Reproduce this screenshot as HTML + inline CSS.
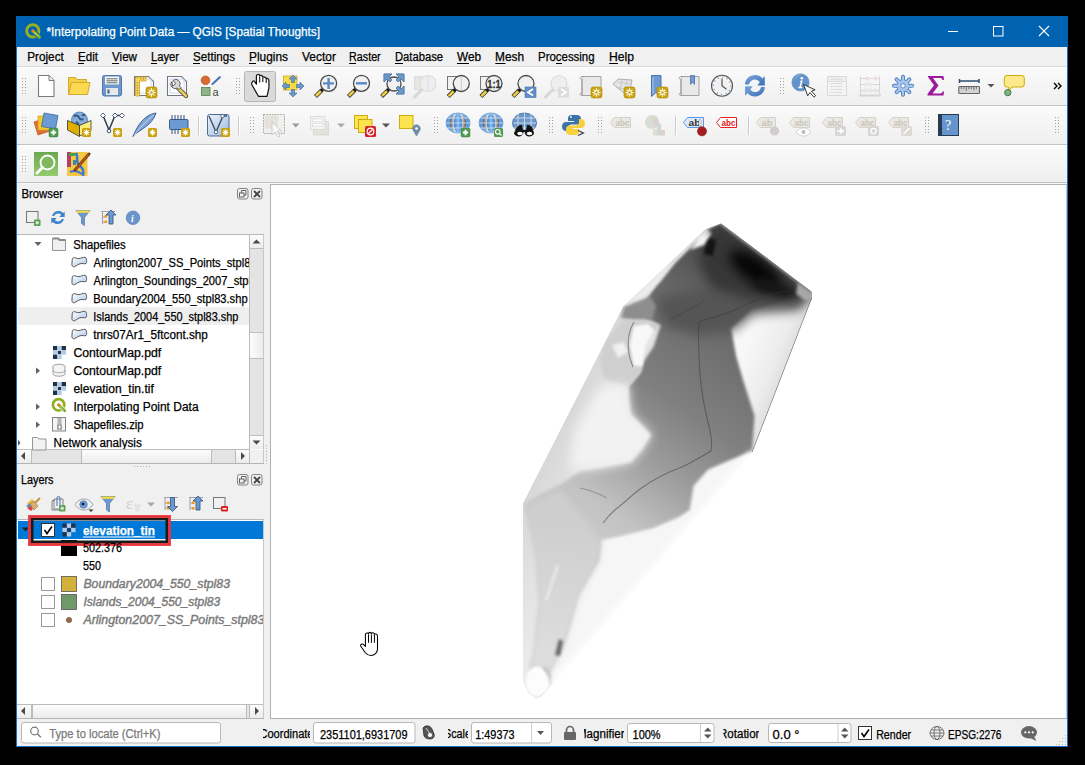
<!DOCTYPE html>
<html><head><meta charset="utf-8">
<style>
*{box-sizing:border-box}
html,body{margin:0;padding:0}
body{width:1085px;height:765px;background:#000;position:relative;overflow:hidden;font-family:"Liberation Sans",sans-serif;font-size:11px;color:#000}
.a{position:absolute}
.tb{position:absolute;left:17px;width:1050px;background:linear-gradient(#fafafa,#efefef);border-bottom:1px solid #c2c2c2;border-top:1px solid #fff}
</style></head>
<body>
<div class="a" style="left:16px;top:16px;width:1052px;height:731px;background:#f0f0f0;border:1px solid #1a6fc0"></div>
<div class="a" style="left:16px;top:16px;width:1052px;height:31px;background:#0063b1"></div>
<div class="a" style="left:17px;top:47px;width:1050px;height:20px;background:#f0f0f0;border-bottom:1px solid #dadada"></div>
<div class="tb" style="top:67px;height:39px"></div>
<div class="tb" style="top:106px;height:39px"></div>
<div class="tb" style="top:145px;height:38px"></div>
<div class="a" style="left:17px;top:183px;width:1050px;height:1px;background:#f6f6f6"></div>
<div class="a" style="left:270px;top:184px;width:797px;height:535px;background:#fff;border:1px solid #b0b0b0;border-right:1px solid #c8c8c8"></div>
<svg width="1085" height="765" style="position:absolute;left:0;top:0"><defs><clipPath id="fp"><path d="M721 223.5 L812 292 L812 298 L752.5 452 L541 697 L536 699 L528 693 L523 682 L523 503 L606.5 339 L623 306.5 L696.5 237.6 L706 229 Z"/></clipPath><filter id="b0" x="-30%" y="-30%" width="160%" height="160%" color-interpolation-filters="sRGB"><feGaussianBlur stdDeviation="0.8"/></filter><filter id="b1" x="-30%" y="-30%" width="160%" height="160%" color-interpolation-filters="sRGB"><feGaussianBlur stdDeviation="1.6"/></filter><filter id="b2" x="-30%" y="-30%" width="160%" height="160%" color-interpolation-filters="sRGB"><feGaussianBlur stdDeviation="3"/></filter><filter id="b3" x="-30%" y="-30%" width="160%" height="160%" color-interpolation-filters="sRGB"><feGaussianBlur stdDeviation="6"/></filter><filter id="b4" x="-30%" y="-30%" width="160%" height="160%" color-interpolation-filters="sRGB"><feGaussianBlur stdDeviation="10"/></filter><linearGradient id="bodyg" gradientUnits="userSpaceOnUse" x1="760" y1="270" x2="560" y2="560"><stop offset="0" stop-color="#4a4a4a"/><stop offset="0.22" stop-color="#6c6c6c"/><stop offset="0.45" stop-color="#808080"/><stop offset="0.62" stop-color="#9c9c9c"/><stop offset="0.8" stop-color="#c2c2c2"/><stop offset="1" stop-color="#d0d0d0"/></linearGradient><linearGradient id="chang" gradientUnits="userSpaceOnUse" x1="560" y1="520" x2="540" y2="680"><stop offset="0" stop-color="#cecece"/><stop offset="1" stop-color="#e0e0e0"/></linearGradient><linearGradient id="baseg" gradientUnits="userSpaceOnUse" x1="545" y1="410" x2="630" y2="450"><stop offset="0" stop-color="#d2d2d2"/><stop offset="1" stop-color="#ececec"/></linearGradient><linearGradient id="rightg" gradientUnits="userSpaceOnUse" x1="740" y1="360" x2="790" y2="380"><stop offset="0" stop-color="#f8f8f8"/><stop offset="0.6" stop-color="#ececec"/><stop offset="1" stop-color="#d8d8d8"/></linearGradient></defs><g clip-path="url(#fp)"><path d="M721 223.5 L812 292 L812 298 L752.5 452 L541 697 L536 699 L528 693 L523 682 L523 503 L606.5 339 L623 306.5 L696.5 237.6 L706 229 Z" fill="url(#baseg)"/><path d="M752 309 L790 300 L812 294 L812 298 L752.5 452 L740 452 L754.6 416 L743 380 L736 356 L731 328 Z" fill="url(#rightg)"/><path d="M708 469.5 L730 460 L752 451 L760 452 L541 700 L565.4 641.6 L578.5 595.9 L599 560 L601 540 L620 536 L653 528 L678.8 517 L689.7 509.7 L693.4 486 Z" fill="#f6f6f6" filter="url(#b1)"/><path d="M721 223.5 L812 292 L811 292 L787.8 301.6 L752 309 L731 328 L736 356 L743 380 L754.6 416 L752 451 L730 460 L708 469.5 L693.4 486 L689.7 509.7 L678.8 517 L653 528 L620 536 L601 540 L599 560 L578.5 595.9 L565.4 641.6 L552.3 667.8 L540 690 L529.4 667.8 L532.7 654.7 L539 602.4 L536 556.6 L523.6 504.6 L523.6 504.6 L539 495 L563 483 L580 471.3 L600 468 L631 462 L642 449.4 L651.3 434.8 L631 414.6 L629 400 L629 386 L640.7 372 L644 361 L653.5 346.8 L660.6 325.6 L646 318 L640 308 L648 298 L657 283 L672 263 L690 246 L706 231 Z" fill="url(#bodyg)" filter="url(#b1)"/><path d="M528 508 L560 490 L601 540 L599 560 L578.5 595.9 L565.4 641.6 L552.3 667.8 L529.4 667.8 L532.7 654.7 L539 602.4 L536 556.6 Z" fill="url(#chang)" filter="url(#b2)"/><path d="M655 298 L700 288 L770 298 L812 292 L800 310 L753 314 L734 330 L700 336 L664 326 Z" fill="#555555" filter="url(#b3)"/><path d="M721 223.5 L812 292 L800 302 L752 300 L712 288 L698 262 L704 238 Z" fill="#363636" filter="url(#b3)"/><ellipse cx="0" cy="0" rx="30" ry="12" fill="#050505" filter="url(#b3)" transform="translate(755 270) rotate(35)"/><path d="M762 276 L798 292 L784 297 L752 287 Z" fill="#161616" filter="url(#b2)"/><path d="M707 238 L716 240 L713 256 L704 254 Z" fill="#141414" filter="url(#b1)"/><path d="M798 282 L812 291 L812 299 L806 301 L796 294 Z" fill="#a8a8a8" filter="url(#b1)"/><path d="M721 223.5L812 292" stroke="#8a8a8a" stroke-width="3" filter="url(#b1)"/><path d="M706 229 L696.5 237.6 L623.3 306.5 L626 308 L642 300 L660 282 L676 262 L694 244 L710 232 Z" fill="#ececec" filter="url(#b1)"/><path d="M700 236 L712 232 L704 245 L690 250 Z" fill="#f4f4f4" filter="url(#b1)"/><path d="M650 297 L636 302 L624 307 L621 318 L634 320 L652 320 L656 306 Z" fill="#8e8e8e" filter="url(#b1)"/><path d="M606 340 L624 320 L645 320 L660.6 325.6 L646.5 337 L640.7 372 L629 386 L604 380 L600 360 Z" fill="#cfcfcf" filter="url(#b1)"/><path d="M634 326 L648 324 L654 330 L646 345 L642 366 L634 366 L630 345 Z" fill="#f8f8f8" filter="url(#b0)"/><path d="M612 345 L624 342 L628 352 L618 358 Z" fill="#f0f0f0" filter="url(#b1)"/><path d="M634 322c-5 8-7 20-5 32 1 6 3 10 4 13" fill="none" stroke="#555" stroke-width="1.1" opacity="0.6"/><path d="M604 384 L629 386 L629 400 L631 414.6 L651.3 434.8 L642 449.4 L631 462 L600 468 L570 470 L575 430 L595 395 Z" fill="#f2f2f2" filter="url(#b3)"/><path d="M790 291c-12 0-30 6-45 14-14 8-28 12-45 16-2 5-2 15-1 30 0 20 2 35 4 48 2 10 3 15 7 32 2 8 2 14 1 20-10 6-20 12-29 16-14 5-28 12-42 22-9 7-16 14-24 20-6 5-10 10-13 14" fill="none" stroke="#3a3a3a" stroke-width="1.1" opacity="0.5"/><path d="M580 488c9 2 18 5 27 10" fill="none" stroke="#555" stroke-width="1" opacity="0.45"/><path d="M705 300c-8 6-20 12-35 20" fill="none" stroke="#333" stroke-width="1" opacity="0.35"/><path d="M555 655l4-16 4 2-3 15z" fill="#666" filter="url(#b1)"/><path d="M546 600c4-10 8-25 12-35" fill="none" stroke="#f2f2f2" stroke-width="2" filter="url(#b1)"/><ellipse cx="537" cy="681.5" rx="11" ry="15" fill="#fcfcfc" filter="url(#b0)"/><path d="M544 668c4 3 7 8 7 14s-4 12-10 15" fill="none" stroke="#c4c4c4" stroke-width="2.6" filter="url(#b0)"/><path d="M752.5 452L541 697" stroke="#fff" stroke-width="5" filter="url(#b2)"/><path d="M812 298L752.5 452" stroke="#444" stroke-width="1.2" opacity="0.7"/></g><path d="M365.4 646.4V635C365.4 632.6 368.3 632.6 368.6 634C368.8 631.8 371.2 631.8 371.4 634C371.6 632.4 374.2 632.4 374.4 634.4C374.6 633.6 377.5 633.6 377.5 636.2V649C377.5 652.5 374.5 655.5 371 655.5C368.5 655.5 366.8 654.5 365.5 653L360.8 646.2C360 645 361.5 643.5 363 644.2Z" fill="#fff" stroke="#000" stroke-width="1.05" stroke-linejoin="round"/><path d="M368.5 634.5V642.8M371.4 634.5V642.8M374.4 634.5V642.8" stroke="#000" stroke-width="1"/></svg>
<svg width="1085" height="765" viewBox="0 0 1085 765" style="position:absolute;left:0;top:0"><rect x="22" y="78" width="1" height="1" fill="#a0a0a0"/><rect x="25" y="78" width="1" height="1" fill="#a0a0a0"/><rect x="22" y="81" width="1" height="1" fill="#a0a0a0"/><rect x="25" y="81" width="1" height="1" fill="#a0a0a0"/><rect x="22" y="84" width="1" height="1" fill="#a0a0a0"/><rect x="25" y="84" width="1" height="1" fill="#a0a0a0"/><rect x="22" y="87" width="1" height="1" fill="#a0a0a0"/><rect x="25" y="87" width="1" height="1" fill="#a0a0a0"/><rect x="22" y="90" width="1" height="1" fill="#a0a0a0"/><rect x="25" y="90" width="1" height="1" fill="#a0a0a0"/><rect x="22" y="93" width="1" height="1" fill="#a0a0a0"/><rect x="25" y="93" width="1" height="1" fill="#a0a0a0"/><rect x="236" y="78" width="1" height="1" fill="#a0a0a0"/><rect x="239" y="78" width="1" height="1" fill="#a0a0a0"/><rect x="236" y="81" width="1" height="1" fill="#a0a0a0"/><rect x="239" y="81" width="1" height="1" fill="#a0a0a0"/><rect x="236" y="84" width="1" height="1" fill="#a0a0a0"/><rect x="239" y="84" width="1" height="1" fill="#a0a0a0"/><rect x="236" y="87" width="1" height="1" fill="#a0a0a0"/><rect x="239" y="87" width="1" height="1" fill="#a0a0a0"/><rect x="236" y="90" width="1" height="1" fill="#a0a0a0"/><rect x="239" y="90" width="1" height="1" fill="#a0a0a0"/><rect x="236" y="93" width="1" height="1" fill="#a0a0a0"/><rect x="239" y="93" width="1" height="1" fill="#a0a0a0"/><rect x="780" y="78" width="1" height="1" fill="#a0a0a0"/><rect x="783" y="78" width="1" height="1" fill="#a0a0a0"/><rect x="780" y="81" width="1" height="1" fill="#a0a0a0"/><rect x="783" y="81" width="1" height="1" fill="#a0a0a0"/><rect x="780" y="84" width="1" height="1" fill="#a0a0a0"/><rect x="783" y="84" width="1" height="1" fill="#a0a0a0"/><rect x="780" y="87" width="1" height="1" fill="#a0a0a0"/><rect x="783" y="87" width="1" height="1" fill="#a0a0a0"/><rect x="780" y="90" width="1" height="1" fill="#a0a0a0"/><rect x="783" y="90" width="1" height="1" fill="#a0a0a0"/><rect x="780" y="93" width="1" height="1" fill="#a0a0a0"/><rect x="783" y="93" width="1" height="1" fill="#a0a0a0"/><rect x="22" y="117" width="1" height="1" fill="#a0a0a0"/><rect x="25" y="117" width="1" height="1" fill="#a0a0a0"/><rect x="22" y="120" width="1" height="1" fill="#a0a0a0"/><rect x="25" y="120" width="1" height="1" fill="#a0a0a0"/><rect x="22" y="123" width="1" height="1" fill="#a0a0a0"/><rect x="25" y="123" width="1" height="1" fill="#a0a0a0"/><rect x="22" y="126" width="1" height="1" fill="#a0a0a0"/><rect x="25" y="126" width="1" height="1" fill="#a0a0a0"/><rect x="22" y="129" width="1" height="1" fill="#a0a0a0"/><rect x="25" y="129" width="1" height="1" fill="#a0a0a0"/><rect x="22" y="132" width="1" height="1" fill="#a0a0a0"/><rect x="25" y="132" width="1" height="1" fill="#a0a0a0"/><rect x="250" y="117" width="1" height="1" fill="#a0a0a0"/><rect x="253" y="117" width="1" height="1" fill="#a0a0a0"/><rect x="250" y="120" width="1" height="1" fill="#a0a0a0"/><rect x="253" y="120" width="1" height="1" fill="#a0a0a0"/><rect x="250" y="123" width="1" height="1" fill="#a0a0a0"/><rect x="253" y="123" width="1" height="1" fill="#a0a0a0"/><rect x="250" y="126" width="1" height="1" fill="#a0a0a0"/><rect x="253" y="126" width="1" height="1" fill="#a0a0a0"/><rect x="250" y="129" width="1" height="1" fill="#a0a0a0"/><rect x="253" y="129" width="1" height="1" fill="#a0a0a0"/><rect x="250" y="132" width="1" height="1" fill="#a0a0a0"/><rect x="253" y="132" width="1" height="1" fill="#a0a0a0"/><rect x="434" y="117" width="1" height="1" fill="#a0a0a0"/><rect x="437" y="117" width="1" height="1" fill="#a0a0a0"/><rect x="434" y="120" width="1" height="1" fill="#a0a0a0"/><rect x="437" y="120" width="1" height="1" fill="#a0a0a0"/><rect x="434" y="123" width="1" height="1" fill="#a0a0a0"/><rect x="437" y="123" width="1" height="1" fill="#a0a0a0"/><rect x="434" y="126" width="1" height="1" fill="#a0a0a0"/><rect x="437" y="126" width="1" height="1" fill="#a0a0a0"/><rect x="434" y="129" width="1" height="1" fill="#a0a0a0"/><rect x="437" y="129" width="1" height="1" fill="#a0a0a0"/><rect x="434" y="132" width="1" height="1" fill="#a0a0a0"/><rect x="437" y="132" width="1" height="1" fill="#a0a0a0"/><rect x="549" y="117" width="1" height="1" fill="#a0a0a0"/><rect x="552" y="117" width="1" height="1" fill="#a0a0a0"/><rect x="549" y="120" width="1" height="1" fill="#a0a0a0"/><rect x="552" y="120" width="1" height="1" fill="#a0a0a0"/><rect x="549" y="123" width="1" height="1" fill="#a0a0a0"/><rect x="552" y="123" width="1" height="1" fill="#a0a0a0"/><rect x="549" y="126" width="1" height="1" fill="#a0a0a0"/><rect x="552" y="126" width="1" height="1" fill="#a0a0a0"/><rect x="549" y="129" width="1" height="1" fill="#a0a0a0"/><rect x="552" y="129" width="1" height="1" fill="#a0a0a0"/><rect x="549" y="132" width="1" height="1" fill="#a0a0a0"/><rect x="552" y="132" width="1" height="1" fill="#a0a0a0"/><rect x="598" y="117" width="1" height="1" fill="#a0a0a0"/><rect x="601" y="117" width="1" height="1" fill="#a0a0a0"/><rect x="598" y="120" width="1" height="1" fill="#a0a0a0"/><rect x="601" y="120" width="1" height="1" fill="#a0a0a0"/><rect x="598" y="123" width="1" height="1" fill="#a0a0a0"/><rect x="601" y="123" width="1" height="1" fill="#a0a0a0"/><rect x="598" y="126" width="1" height="1" fill="#a0a0a0"/><rect x="601" y="126" width="1" height="1" fill="#a0a0a0"/><rect x="598" y="129" width="1" height="1" fill="#a0a0a0"/><rect x="601" y="129" width="1" height="1" fill="#a0a0a0"/><rect x="598" y="132" width="1" height="1" fill="#a0a0a0"/><rect x="601" y="132" width="1" height="1" fill="#a0a0a0"/><rect x="925" y="117" width="1" height="1" fill="#a0a0a0"/><rect x="928" y="117" width="1" height="1" fill="#a0a0a0"/><rect x="925" y="120" width="1" height="1" fill="#a0a0a0"/><rect x="928" y="120" width="1" height="1" fill="#a0a0a0"/><rect x="925" y="123" width="1" height="1" fill="#a0a0a0"/><rect x="928" y="123" width="1" height="1" fill="#a0a0a0"/><rect x="925" y="126" width="1" height="1" fill="#a0a0a0"/><rect x="928" y="126" width="1" height="1" fill="#a0a0a0"/><rect x="925" y="129" width="1" height="1" fill="#a0a0a0"/><rect x="928" y="129" width="1" height="1" fill="#a0a0a0"/><rect x="925" y="132" width="1" height="1" fill="#a0a0a0"/><rect x="928" y="132" width="1" height="1" fill="#a0a0a0"/><rect x="1055" y="117" width="1" height="1" fill="#a0a0a0"/><rect x="1058" y="117" width="1" height="1" fill="#a0a0a0"/><rect x="1055" y="120" width="1" height="1" fill="#a0a0a0"/><rect x="1058" y="120" width="1" height="1" fill="#a0a0a0"/><rect x="1055" y="123" width="1" height="1" fill="#a0a0a0"/><rect x="1058" y="123" width="1" height="1" fill="#a0a0a0"/><rect x="1055" y="126" width="1" height="1" fill="#a0a0a0"/><rect x="1058" y="126" width="1" height="1" fill="#a0a0a0"/><rect x="1055" y="129" width="1" height="1" fill="#a0a0a0"/><rect x="1058" y="129" width="1" height="1" fill="#a0a0a0"/><rect x="1055" y="132" width="1" height="1" fill="#a0a0a0"/><rect x="1058" y="132" width="1" height="1" fill="#a0a0a0"/><rect x="22" y="156" width="1" height="1" fill="#a0a0a0"/><rect x="25" y="156" width="1" height="1" fill="#a0a0a0"/><rect x="22" y="159" width="1" height="1" fill="#a0a0a0"/><rect x="25" y="159" width="1" height="1" fill="#a0a0a0"/><rect x="22" y="162" width="1" height="1" fill="#a0a0a0"/><rect x="25" y="162" width="1" height="1" fill="#a0a0a0"/><rect x="22" y="165" width="1" height="1" fill="#a0a0a0"/><rect x="25" y="165" width="1" height="1" fill="#a0a0a0"/><rect x="22" y="168" width="1" height="1" fill="#a0a0a0"/><rect x="25" y="168" width="1" height="1" fill="#a0a0a0"/><rect x="22" y="171" width="1" height="1" fill="#a0a0a0"/><rect x="25" y="171" width="1" height="1" fill="#a0a0a0"/><rect x="198" y="116" width="1" height="19" fill="#cbcbcb"/><rect x="199" y="116" width="1" height="19" fill="#fff"/><rect x="238" y="116" width="1" height="19" fill="#cbcbcb"/><rect x="239" y="116" width="1" height="19" fill="#fff"/><rect x="675" y="116" width="1" height="19" fill="#cbcbcb"/><rect x="676" y="116" width="1" height="19" fill="#fff"/><rect x="748" y="116" width="1" height="19" fill="#cbcbcb"/><rect x="749" y="116" width="1" height="19" fill="#fff"/><path d="M38.5 75.5H49l5 5v16H38.5z" fill="#fff" stroke="#7a7a7a" stroke-width="1.1"/><path d="M49 75.5v5h5" fill="#eee" stroke="#7a7a7a" stroke-width="1"/><path d="M68.5 94.5V77.5h7l1.5 2h9.5v3" fill="#f6cf45" stroke="#d1a92e" stroke-width="1"/><path d="M68.5 94.5l3-12H90l-2.5 12z" fill="#fcd952" stroke="#d1a92e" stroke-width="1"/><rect x="102.5" y="75.5" width="19" height="20.5" rx="2" fill="#6b97cc" stroke="#4f79ad" stroke-width="1"/><rect x="105" y="76.5" width="14" height="8" fill="#f6f6f6"/><path d="M106.5 78.8h11M106.5 80.8h11M106.5 82.8h11" stroke="#444" stroke-width="0.8"/><rect x="106" y="88" width="12" height="7" fill="#e8e8e8"/><rect x="107.5" y="89.5" width="2" height="4" fill="#3f5f8a"/><path d="M134.5 76.5h14l5 5v14h-19z" fill="#fff" stroke="#777" stroke-width="1.1"/><rect x="137" y="79" width="14" height="14" fill="none" stroke="#b8cdf2" stroke-width="0.8"/><path d="M135.5 77h10.5v4h-6.5v15h-4z" fill="#f3d35c" stroke="#c9a22a" stroke-width="0.8"/><path d="M136.5 83h1.8M136.5 85.5h1.8M136.5 88h1.8M136.5 90.5h1.8M136.5 93h1.8M141 78v1.6M143.5 78v1.6" stroke="#8a6a10" stroke-width="0.6"/><rect x="146" y="87" width="11" height="11" rx="2" fill="#c9a20f" stroke="#b18c00" stroke-width="0.6"/><circle cx="151.5" cy="92.5" r="1.9" fill="none" stroke="#fff" stroke-width="1.1"/><path d="M154.10 92.50L155.70 92.50M153.34 94.34L154.47 95.47M151.50 95.10L151.50 96.70M149.66 94.34L148.53 95.47M148.90 92.50L147.30 92.50M149.66 90.66L148.53 89.53M151.50 89.90L151.50 88.30M153.34 90.66L154.47 89.53" stroke="#fff" stroke-width="1.1"/><path d="M167.5 76.5h14l5 5v14h-19z" fill="#fff" stroke="#777" stroke-width="1.1"/><rect x="170" y="79" width="14" height="14" fill="none" stroke="#b8cdf2" stroke-width="0.8"/><path d="M178 88l8 8" stroke="#4a4020" stroke-width="4.2" stroke-linecap="round"/><path d="M178 88l8 8" stroke="#e8cc6a" stroke-width="2.6" stroke-linecap="round"/><path d="M172 81.5a4.3 4.3 0 0 0 5.5 6.5l1.5 1.5 2-2-1.5-1.5a4.3 4.3 0 0 0-6.5-5.5l2.5 2.5-1 2-2 1z" fill="#d8d8d8" stroke="#555" stroke-width="0.9"/><circle cx="205.5" cy="80.3" r="4.3" fill="#d86b32" stroke="#b45220" stroke-width="0.8"/><path d="M212.5 84l7.3-6.8" stroke="#4a78b6" stroke-width="2.2" stroke-linecap="round"/><rect x="201.5" y="87.5" width="8.5" height="8" fill="#8fb48b" stroke="#5a8d55" stroke-width="0.9"/><text x="212.5" y="95.5" font-size="11" font-family="Liberation Sans" fill="#444">a</text><rect x="244.5" y="71.5" width="31" height="30" rx="2" fill="#dadada" stroke="#b5b5b5"/><path d="M256.4 84.2V76C256.4 74 259.6 74 259.7 75.8C260 75 262.6 75 262.8 77C263.3 76.8 266 76.8 266.2 78.8C266.6 78.2 268.9 78.2 268.9 80.5V88L267 96.3H258.4L252 85C251 83.3 252.5 80.5 254 80.8Z" fill="#fff" stroke="#111" stroke-width="1.2" stroke-linejoin="round"/><path d="M259.7 76.5V82.4M262.8 77.5V82M266.2 79.2V82.9" stroke="#111" stroke-width="1.1"/><rect x="283.5" y="76" width="13.5" height="14" fill="#f8de3f" stroke="#cda82b" stroke-width="0.8"/><path d="M293 75l4 4h-2.5v3.5h-3V79H289zM293 97l4-4h-2.5v-3.5h-3V93H289zM282 86l4-4v2.5h3.5v3H286V90zM304 86l-4-4v2.5h-3.5v3H300V90z" fill="#6d97c9" stroke="#4a74a8" stroke-width="0.7"/><path d="M315.5 96.5L322.0 90.0" stroke="#3a3a3a" stroke-width="4.2" stroke-linecap="butt"/><path d="M316.0 96.0L320.8 91.2" stroke="#f2cf3b" stroke-width="2.6"/><path d="M321.5 90.5L323.5 88.5" stroke="#111" stroke-width="3"/><circle cx="328.6" cy="83.4" r="8" fill="#f0f0f0" stroke="#4a4a4a" stroke-width="1.3"/><path d="M328.6 78v11M323 83.4h11" stroke="#5a8ac4" stroke-width="2.4"/><path d="M348.4 96.39999999999999L354.9 89.89999999999999" stroke="#3a3a3a" stroke-width="4.2" stroke-linecap="butt"/><path d="M348.9 95.89999999999999L353.7 91.1" stroke="#f2cf3b" stroke-width="2.6"/><path d="M354.4 90.39999999999999L356.4 88.39999999999999" stroke="#111" stroke-width="3"/><circle cx="361.5" cy="83.3" r="8" fill="#f0f0f0" stroke="#4a4a4a" stroke-width="1.3"/><path d="M356 83.3h11" stroke="#5a8ac4" stroke-width="2.4"/><path d="M384 74h8l-3 3 3 3-2 2-3-3-3 3zM404 74v8l-3-3-3 3-2-2 3-3-3-3zM404 94h-8l3-3-3-3 2-2 3 3 3-3z" fill="#6d97c9" stroke="#4a74a8" stroke-width="0.7"/><path d="M381.6 96.4L388.1 89.9" stroke="#3a3a3a" stroke-width="4.2" stroke-linecap="butt"/><path d="M382.1 95.9L386.90000000000003 91.10000000000001" stroke="#f2cf3b" stroke-width="2.6"/><path d="M387.6 90.4L389.6 88.4" stroke="#111" stroke-width="3"/><circle cx="394" cy="84" r="7" fill="#f0f0f0" stroke="#4a4a4a" stroke-width="1.3"/><path d="M384 74h8l-3 3 3 3-2 2-3-3-3 3zM404 74v8l-3-3-3 3-2-2 3-3-3-3zM404 94h-8l3-3-3-3 2-2 3 3 3-3z" fill="#6d97c9" stroke="#4a74a8" stroke-width="0.7"/><rect x="414.5" y="76.5" width="10" height="13" fill="#e6e6e0" stroke="#dcdcd8"/><path d="M414.4 97.1L422.4 89.1" stroke="#d8d8d8" stroke-width="3.2" stroke-linecap="round"/><circle cx="428" cy="83.5" r="8" fill="#eeeeee" stroke="#dcdcdc" stroke-width="1.2"/><path d="M428 76v15" stroke="#dedede" stroke-width="1"/><rect x="447.5" y="76.5" width="10" height="13" fill="#f1f1f1" stroke="#777"/><path d="M448.2 96.6L454.7 90.1" stroke="#3a3a3a" stroke-width="4.2" stroke-linecap="butt"/><path d="M448.7 96.1L453.5 91.3" stroke="#f2cf3b" stroke-width="2.6"/><path d="M454.2 90.6L456.2 88.6" stroke="#111" stroke-width="3"/><circle cx="461.3" cy="83.5" r="8" fill="#f0f0f0" stroke="#4a4a4a" stroke-width="1.3"/><path d="M461.3 76v15" stroke="#ccc" stroke-width="1"/><rect x="480.5" y="76.5" width="10" height="13" fill="#f1f1f1" stroke="#777"/><path d="M480.9 96.6L487.4 90.1" stroke="#3a3a3a" stroke-width="4.2" stroke-linecap="butt"/><path d="M481.4 96.1L486.2 91.3" stroke="#f2cf3b" stroke-width="2.6"/><path d="M486.9 90.6L488.9 88.6" stroke="#111" stroke-width="3"/><circle cx="494" cy="83.5" r="8" fill="#f0f0f0" stroke="#4a4a4a" stroke-width="1.3"/><text x="487.3" y="88" font-size="10.5" font-weight="bold" font-family="Liberation Sans" fill="#333" stroke="#333" stroke-width="0.3" textLength="13.5" lengthAdjust="spacingAndGlyphs">1:1</text><path d="M512.9 96.6L519.4 90.1" stroke="#3a3a3a" stroke-width="4.2" stroke-linecap="butt"/><path d="M513.4 96.1L518.1999999999999 91.3" stroke="#f2cf3b" stroke-width="2.6"/><path d="M518.9 90.6L520.9 88.6" stroke="#111" stroke-width="3"/><circle cx="526" cy="83.5" r="8" fill="#f0f0f0" stroke="#4a4a4a" stroke-width="1.3"/><rect x="525" y="87" width="11" height="10.5" fill="#5f8fc9" stroke="#4a74a8" stroke-width="0.6"/><path d="M533 89l-5 3.2 5 3.2" fill="none" stroke="#fff" stroke-width="1.8"/><path d="M545.4 97.1L553.4 89.1" stroke="#d8d8d8" stroke-width="3.2" stroke-linecap="round"/><circle cx="559" cy="83.5" r="8" fill="#eeeeee" stroke="#dcdcdc" stroke-width="1.2"/><rect x="558" y="87" width="11" height="10.5" fill="#dcdcdc"/><path d="M561 89l5 3.2-5 3.2" fill="none" stroke="#fff" stroke-width="1.8"/><path d="M582 76.5h19v19h-19z" fill="#e9e9e9" stroke="#9a9a9a" stroke-width="0.9"/><path d="M582 76.5c-2.5 0-2.5 3 0 3v16c-2.5 0-2.5-2.5 0-2.5" fill="#f6f6f6" stroke="#9a9a9a" stroke-width="0.9"/><rect x="591" y="87" width="11" height="11" rx="2" fill="#c9a20f" stroke="#b18c00" stroke-width="0.6"/><circle cx="596.5" cy="92.5" r="1.9" fill="none" stroke="#fff" stroke-width="1.1"/><path d="M599.10 92.50L600.70 92.50M598.34 94.34L599.47 95.47M596.50 95.10L596.50 96.70M594.66 94.34L593.53 95.47M593.90 92.50L592.30 92.50M594.66 90.66L593.53 89.53M596.50 89.90L596.50 88.30M598.34 90.66L599.47 89.53" stroke="#fff" stroke-width="1.1"/><path d="M613 84l5-5 14 1-2 10-6 3z" fill="#e4e4e4" stroke="#a8a8a8" stroke-width="0.9"/><path d="M617 82l13 2M616 87l8 2M622 80l-2 10M627 80l-2 10" stroke="#c0c0c0" stroke-width="0.7"/><rect x="624" y="87" width="11" height="11" rx="2" fill="#c9a20f" stroke="#b18c00" stroke-width="0.6"/><circle cx="629.5" cy="92.5" r="1.9" fill="none" stroke="#fff" stroke-width="1.1"/><path d="M632.10 92.50L633.70 92.50M631.34 94.34L632.47 95.47M629.50 95.10L629.50 96.70M627.66 94.34L626.53 95.47M626.90 92.50L625.30 92.50M627.66 90.66L626.53 89.53M629.50 89.90L629.50 88.30M631.34 90.66L632.47 89.53" stroke="#fff" stroke-width="1.1"/><path d="M651.5 75.5h9.5v21l-5-4-4.5 4z" fill="#6d9bd1" stroke="#3f6aa3" stroke-width="0.9"/><path d="M653 77v17" stroke="#a8c6ec" stroke-width="1"/><rect x="657" y="87" width="11" height="11" rx="2" fill="#c9a20f" stroke="#b18c00" stroke-width="0.6"/><circle cx="662.5" cy="92.5" r="1.9" fill="none" stroke="#fff" stroke-width="1.1"/><path d="M665.10 92.50L666.70 92.50M664.34 94.34L665.47 95.47M662.50 95.10L662.50 96.70M660.66 94.34L659.53 95.47M659.90 92.50L658.30 92.50M660.66 90.66L659.53 89.53M662.50 89.90L662.50 88.30M664.34 90.66L665.47 89.53" stroke="#fff" stroke-width="1.1"/><path d="M681 76.5h18v19h-18z" fill="#e9e9e9" stroke="#9a9a9a" stroke-width="0.9"/><path d="M681 76.5c-2.5 0-2.5 3 0 3v16c-2.5 0-2.5-2.5 0-2.5" fill="#f6f6f6" stroke="#9a9a9a" stroke-width="0.9"/><path d="M690.5 75.5h4v9l-2-2.5-2 2.5z" fill="#6d9bd1" stroke="#3f6aa3" stroke-width="0.7"/><circle cx="722" cy="85.8" r="10.5" fill="#f2f2f2" stroke="#555" stroke-width="1.1"/><circle cx="722" cy="85.8" r="8.7" fill="none" stroke="#6d97d0" stroke-width="1.4" stroke-dasharray="1 3.55"/><path d="M722 78.5v7.3l4.5 3.5" fill="none" stroke="#555" stroke-width="1.2"/><defs><linearGradient id="rfg" x1="0" y1="0" x2="1" y2="1"><stop offset="0" stop-color="#7aa6dc"/><stop offset="1" stop-color="#3a6fb8"/></linearGradient></defs><path d="M745 84.5C745 79 750 75 755 75C758.5 75 761 76.5 762.5 78.5L764.8 76V85.6H757.2L759.8 82.2C758.5 80.5 756.8 79.5 755 79.5C752 79.5 749.5 81.5 749 84.5Z" fill="url(#rfg)"/><path d="M764.8 87C764.8 92.5 760 96.5 755 96.5C751.5 96.5 749 95 747.5 93L745 95.8V86.2H752.8L750.2 89.5C751.5 91.2 753.2 92 755 92C758 92 760.5 90 761 87Z" fill="url(#rfg)"/><circle cx="800.5" cy="82.4" r="8.6" fill="#6393cb" stroke="#5584bd" stroke-width="0.6"/><path d="M795 79a7 7 0 0 1 6-4.5" stroke="#9fc0e6" stroke-width="0.8" fill="none"/><circle cx="801.8" cy="78.3" r="1.3" fill="#fff"/><path d="M800.5 80.5h2.2l-1.8 6.5h1.5l-.4 1.3h-4l.4-1.3h.9l1.5-5.2h-.8z" fill="#fff"/><path d="M803.5 84.5l4.2 11.3 2.2-3.2 4.2 4.6 1.6-1.5-4.2-4.6 3.6-1.3z" fill="#fff" stroke="#222" stroke-width="0.9" stroke-linejoin="round"/><rect x="827.5" y="76.5" width="19" height="19" fill="#f4f4f4" stroke="#d8dadc"/><rect x="828" y="77" width="18" height="4.5" fill="#eceef0"/><path d="M828 81.5h18.5" stroke="#d8dadc" stroke-width="0.9"/><path d="M830 79.2h3.8M834.5 79.2h7.5M830 83.5h3.8M834.5 83.5h7.5M830 86.5h3.8M834.5 86.5h7.5M830 89.5h3.8M834.5 89.5h7.5M830 92.5h3.8M834.5 92.5h7.5" stroke="#d6d8da" stroke-width="0.9"/><path d="M860.5 76v19M879.5 76v19M860.5 78.5h19M860.5 84.5h19M860.5 90.5h19" stroke="#d2d2d2" stroke-width="0.9"/><rect x="859" y="94.5" width="22" height="2" fill="#d6d6d6"/><g fill="#f2eeee" stroke="#e0c8c8" stroke-width="0.8"><path d="M867.2 76.6l1.9 1.9-1.9 1.9-1.9-1.9zM875.6 76.6l1.9 1.9-1.9 1.9-1.9-1.9z"/></g><g fill="#eef0ee" stroke="#d6dcd6" stroke-width="0.8"><path d="M865.6 82.6l1.9 1.9-1.9 1.9-1.9-1.9zM870.4 82.6l1.9 1.9-1.9 1.9-1.9-1.9z"/></g><g fill="#eef0ee" stroke="#d8d4d8" stroke-width="0.8"><path d="M865.6 88.6l1.9 1.9-1.9 1.9-1.9-1.9zM870.4 88.6l1.9 1.9-1.9 1.9-1.9-1.9zM875.4 88.6l1.9 1.9-1.9 1.9-1.9-1.9z"/></g><path d="M903.00 85.80L903.00 76.80M903.00 85.80L909.36 79.44M903.00 85.80L912.00 85.80M903.00 85.80L909.36 92.16M903.00 85.80L903.00 94.80M903.00 85.80L896.64 92.16M903.00 85.80L894.00 85.80M903.00 85.80L896.64 79.44" stroke="#4a7fc4" stroke-width="4" stroke-linecap="round"/><circle cx="903" cy="85.8" r="6.6" fill="#4a7fc4"/><path d="M903.00 85.80L903.00 76.80M903.00 85.80L909.36 79.44M903.00 85.80L912.00 85.80M903.00 85.80L909.36 92.16M903.00 85.80L903.00 94.80M903.00 85.80L896.64 92.16M903.00 85.80L894.00 85.80M903.00 85.80L896.64 79.44" stroke="#a9c5ea" stroke-width="2.2" stroke-linecap="round"/><circle cx="903" cy="85.8" r="5.7" fill="#a9c5ea"/><circle cx="903" cy="85.8" r="2.2" fill="#fff" stroke="#4a7fc4" stroke-width="0.9"/><path d="M928 76h15.5l.5 4h-1.5c-.5-1.5-1-2-3-2h-6.5l5.5 7.5-6 8h7c2 0 2.5-.5 3-2h1.5l-.5 4H927.5v-1.5l6.5-8.7-6-8.3z" fill="#9d1a9d"/><path d="M959.5 81h19.5M959.5 79v4M979 79v4" stroke="#2d4d70" stroke-width="1.5"/><rect x="958.8" y="86.5" width="20.7" height="7" rx="0.8" fill="#d4d4d4" stroke="#666" stroke-width="1.1"/><path d="M961.3 87v2.2M963.8 87v2.2M966.3 87v3.8M968.8 87v2.2M971.3 87v2.2M973.8 87v3.2M976.3 87v2.2" stroke="#555" stroke-width="0.8"/><path d="M987.5 84h7l-3.5 3.5z" fill="#555"/><path d="M1006.8 75.5h15a2.5 2.5 0 0 1 2.5 2.5v6.5a2.5 2.5 0 0 1-2.5 2.5h-10l-3.5 4.8.5-4.8h-2a2.5 2.5 0 0 1-2.5-2.5v-6.5a2.5 2.5 0 0 1 2.5-2.5z" fill="#fbe98b" stroke="#d0ac00" stroke-width="1"/><circle cx="1007.8" cy="92.6" r="3.2" fill="#7ab77a" stroke="#4d6b4d" stroke-width="0.9"/><path d="M1054 83l3 3-3 3M1058 83l3 3-3 3" fill="none" stroke="#000" stroke-width="1.4"/><defs><linearGradient id="glb" x1="0" x2="1"><stop offset="0" stop-color="#4f8fdc"/><stop offset="0.5" stop-color="#a8cdf4"/><stop offset="1" stop-color="#4f8fdc"/></linearGradient><linearGradient id="glg" x1="0" x2="1"><stop offset="0" stop-color="#505050"/><stop offset="0.3" stop-color="#e0e0e0"/><stop offset="0.5" stop-color="#e0e0e0"/><stop offset="0.7" stop-color="#e0e0e0"/><stop offset="1" stop-color="#505050"/></linearGradient><linearGradient id="glc" x1="0" x2="1"><stop offset="0" stop-color="#2f78d0"/><stop offset="0.5" stop-color="#8cc0f0"/><stop offset="1" stop-color="#2f78d0"/></linearGradient></defs><path d="M34 122l12-4 4 13-12 4z" fill="#e36d35" stroke="#b9521f" stroke-width="0.7"/><path d="M38 116h13v14H38z" fill="#f3c92b" stroke="#caa020" stroke-width="0.7"/><path d="M44 113l14 2.5-2.5 13.5-14-2.5z" fill="#6b9bd3" stroke="#40679e" stroke-width="0.8"/><rect x="49" y="128" width="9" height="9" rx="1.5" fill="#4e9a50" stroke="#3a7a3c" stroke-width="0.5"/><path d="M53.5 129.8V135.2M50.8 132.5H56.2" stroke="#fff" stroke-width="1.8"/><circle cx="79.5" cy="120" r="8" fill="#86acd8" stroke="#3d6aa3" stroke-width="0.7"/><path d="M74 116.5c2-2 4-1 5 1s3 3 4 1M76 122c2 1 3 3 2 4M82 114.5c1 1 2 1 3 0" stroke="#33598a" stroke-width="2" fill="none"/><path d="M67.5 120.5l12 5v11l-12-6.5z" fill="#e0b000" stroke="#333" stroke-width="0.8"/><path d="M79.5 125.5l11.5-5v10l-11.5 5.5z" fill="#f8ef7a" stroke="#333" stroke-width="0.8"/><rect x="82" y="128" width="9" height="9" rx="1.5" fill="#c9a20f"/><path d="M86.5 129.6V135.4M83.6 132.5H89.4M84.47 130.47L88.53 134.53M88.53 130.47L84.47 134.53" stroke="#fff" stroke-width="1.1"/><path d="M103 115.5l6 14.5 6-14.5h7" fill="none" stroke="#2e3e55" stroke-width="1.5"/><path d="M103 113l2.5 2.5-2.5 2.5-2.5-2.5zM115 113l2.5 2.5-2.5 2.5-2.5-2.5zM122 113l2.5 2.5-2.5 2.5-2.5-2.5z" fill="#fff" stroke="#2e3e55" stroke-width="0.8"/><circle cx="109" cy="131" r="1.8" fill="#fff" stroke="#2e3e55" stroke-width="0.9"/><rect x="113" y="128" width="9" height="9" rx="1.5" fill="#c9a20f"/><path d="M117.5 129.6V135.4M114.6 132.5H120.4M115.47 130.47L119.53 134.53M119.53 130.47L115.47 134.53" stroke="#fff" stroke-width="1.1"/><path d="M133 136.5c3-8 8-16 14-20 3-2 6-3 9-3.5-1 3-3 7-6 10-4 4-9 7-15 11z" fill="#7da6d6" stroke="#35598a" stroke-width="0.9"/><path d="M134 135c6-7 12-14 20-20" stroke="#dce8f6" stroke-width="0.7" fill="none"/><rect x="148" y="128" width="9" height="9" rx="1.5" fill="#c9a20f"/><path d="M152.5 129.6V135.4M149.6 132.5H155.4M150.47 130.47L154.53 134.53M154.53 130.47L150.47 134.53" stroke="#fff" stroke-width="1.1"/><path d="M172 115v5M175 115v5M178 115v5M181 115v5M184 115v5M172 129v5M175 129v5M178 129v5" stroke="#2f4f7f" stroke-width="1"/><rect x="169.5" y="119.5" width="18.5" height="10" rx="1" fill="#6b9ad3" stroke="#2f4f7f" stroke-width="0.9"/><rect x="181" y="128" width="9" height="9" rx="1.5" fill="#c9a20f"/><path d="M185.5 129.6V135.4M182.6 132.5H188.4M183.47 130.47L187.53 134.53M187.53 130.47L183.47 134.53" stroke="#fff" stroke-width="1.1"/><defs><linearGradient id="dg" x1="0" y1="0" x2="1" y2="1"><stop offset="0" stop-color="#eef3fa"/><stop offset="1" stop-color="#9db8dc"/></linearGradient></defs><rect x="207.5" y="114.5" width="21.5" height="21.5" rx="2" fill="url(#dg)" stroke="#4d6d99" stroke-width="1"/><path d="M209 116l7 16 7-16h4" fill="none" stroke="#3a5070" stroke-width="1.4"/><circle cx="216" cy="132" r="1.7" fill="#fff" stroke="#3a5070" stroke-width="0.8"/><circle cx="222.5" cy="116" r="1.7" fill="#fff" stroke="#3a5070" stroke-width="0.8"/><rect x="221" y="128" width="9" height="9" rx="1.5" fill="#c9a20f"/><path d="M225.5 129.6V135.4M222.6 132.5H228.4M223.47 130.47L227.53 134.53M227.53 130.47L223.47 134.53" stroke="#fff" stroke-width="1.1"/><rect x="263.5" y="114.5" width="21" height="19" fill="#f0f0f0" stroke="#9a9a9a" stroke-width="0.9" stroke-dasharray="1.6 1.2"/><rect x="264.5" y="115.5" width="13.5" height="13" fill="#e4e2da"/><path d="M272 122v13l3-3 3 5 2-1-3-5h4.5z" fill="#f8f8f8" stroke="#c8c8c8" stroke-width="0.9" stroke-linejoin="round"/><path d="M292 123.5h7.5l-3.75 4z" fill="#9c9c9c"/><rect x="313.5" y="121.5" width="15" height="13.5" fill="#e4e2da" stroke="#d8d6ce" stroke-width="0.8"/><rect x="310.5" y="116.5" width="14.5" height="13" fill="#f3f3f3" stroke="#d6d6d6" stroke-width="0.8"/><rect x="312.5" y="119" width="10.5" height="2.5" fill="#fff" stroke="#d0d0d0" stroke-width="0.6"/><rect x="312.5" y="123.5" width="10.5" height="2.5" fill="#fff" stroke="#d0d0d0" stroke-width="0.6"/><path d="M337 123.5h8l-4 4z" fill="#a8a8a8"/><rect x="354.5" y="115.5" width="13" height="13" fill="#fbe44f" stroke="#c9a700" stroke-width="0.9"/><rect x="358.5" y="119.5" width="13.5" height="13" fill="#fbe44f" stroke="#c9a700" stroke-width="0.9"/><rect x="365" y="126" width="11" height="11" rx="1.5" fill="#d7202a"/><circle cx="370.5" cy="131.5" r="3.3" fill="none" stroke="#fff" stroke-width="1.2"/><path d="M368.5 133.5l4-4" stroke="#fff" stroke-width="1.2"/><path d="M382 123.5h8l-4 4z" fill="#555"/><rect x="399.5" y="115.5" width="13.5" height="13" fill="#fbe44f" stroke="#c9a700" stroke-width="0.9"/><path d="M416.5 136l-3.5-6a3.8 3.8 0 1 1 7 0z" fill="#6f8ea8" stroke="#56738c" stroke-width="0.5"/><circle cx="416.5" cy="128.5" r="1.3" fill="#fff"/><ellipse cx="458" cy="123" rx="12" ry="10" fill="url(#glb)" stroke="#5b93d6" stroke-width="0.8"/><ellipse cx="458" cy="123" rx="8.5" ry="9.5" fill="url(#glg)"/><ellipse cx="458" cy="123" rx="4" ry="10" fill="url(#glc)"/><path d="M446 123H470M447.5 118H468.5M447.5 128H468.5" stroke="#cfe0f5" stroke-width="0.9"/><rect x="461" y="128" width="9" height="9" rx="1.5" fill="#4e9a50" stroke="#3a7a3c" stroke-width="0.5"/><path d="M465.5 129.8V135.2M462.8 132.5H468.2" stroke="#fff" stroke-width="1.8"/><ellipse cx="491" cy="123" rx="12" ry="10" fill="url(#glb)" stroke="#5b93d6" stroke-width="0.8"/><ellipse cx="491" cy="123" rx="8.5" ry="9.5" fill="url(#glg)"/><ellipse cx="491" cy="123" rx="4" ry="10" fill="url(#glc)"/><path d="M479 123H503M480.5 118H501.5M480.5 128H501.5" stroke="#cfe0f5" stroke-width="0.9"/><rect x="494" y="128" width="9" height="9" rx="1.5" fill="#4e9a50"/><circle cx="497.8" cy="131.8" r="2.3" fill="none" stroke="#fff" stroke-width="1.1"/><path d="M499.5 133.5l2 2" stroke="#fff" stroke-width="1.2"/><ellipse cx="524.5" cy="123" rx="12" ry="10" fill="#6f98c8" stroke="#3d6aa3" stroke-width="0.8"/><path d="M513 123h23M514 118h21M514 128h21M524.5 113v20M518 114v18M531 114v18" stroke="#dbe7f5" stroke-width="0.8"/><path d="M517 127l3-2h2l1 5h3l1-5h2l3 2 2 6c0 2-3 3.5-5 3.5s-4-1.5-4-3.5v-1h-2v1c0 2-2 3.5-4 3.5s-5-1.5-5-3.5z" fill="#111"/><ellipse cx="520" cy="133.5" rx="2.8" ry="1.7" fill="#fff"/><ellipse cx="529.5" cy="133.5" rx="2.8" ry="1.7" fill="#fff"/><path d="M570 115c-4 0-5 1.5-5 3.5V121h6v1h-8c-2.5 0-4 2-4 4.5s1.5 4.5 4 4.5h2v-3c0-2 1.5-3.5 3.5-3.5h6c2 0 3.5-1.5 3.5-3.5V118.5c0-2-2-3.5-4-3.5z" fill="#3c74a8" transform="translate(3 0)"/><path d="M577 135c4 0 5-1.5 5-3.5V129h-6v-1h8c2.5 0 4-2 4-4.5s-1.5-4.5-4-4.5h-2v3c0 2-1.5 3.5-3.5 3.5h-6c-2 0-3.5 1.5-3.5 3.5V131.5c0 2 2 3.5 4 3.5z" fill="#f7d03c" transform="translate(-3 0)"/><circle cx="571" cy="117" r="0.9" fill="#fff"/><path d="M578 130.5l5.5 2.5-5.5 2.5" fill="none" stroke="#333" stroke-width="1.1"/><path d="M614.5 117.5H630.5V127.5H614.5L610.5 122.5z" fill="#ebe9e1" stroke="#d4d2c8" stroke-width="1"/><text x="615.5" y="125.8" font-size="9.5" font-weight="bold" font-family="Liberation Sans" fill="#c6c4bc" textLength="14" lengthAdjust="spacingAndGlyphs">abc</text><circle cx="652" cy="122" r="7" fill="#d6ddd8"/><path d="M652 122V115a7 7 0 0 1 6.1 3.5z" fill="#dcd8c8"/><path d="M652 122l6.1-3.5a7 7 0 0 1-2 8.5z" fill="#dcd0d0"/><rect x="653" y="129" width="4" height="6.5" fill="#e0ded4"/><rect x="657" y="123.5" width="4" height="12" fill="#d0d8d4"/><rect x="661" y="130" width="4" height="5.5" fill="#dcd0d0"/><path d="M687.5 117.5H703.5V127.5H687.5L683.5 122.5z" fill="#dce9fb" stroke="#5c98e8" stroke-width="1"/><text x="688.5" y="125.8" font-size="9.5" font-weight="bold" font-family="Liberation Sans" fill="#333" textLength="12" lengthAdjust="spacingAndGlyphs">ab</text><path d="M699 120.5c0-1.5 2-1.5 2 0v6h-2z" fill="#fff" stroke="#888" stroke-width="0.6"/><circle cx="702" cy="131.3" r="4.6" fill="#a61c1c" stroke="#7a1010" stroke-width="0.5"/><path d="M720.5 117.5H736.5V127.5H720.5L716.5 122.5z" fill="#fff" stroke="#e82020" stroke-width="1"/><text x="721.5" y="125.8" font-size="9.5" font-weight="bold" font-family="Liberation Sans" fill="#e01818" textLength="14" lengthAdjust="spacingAndGlyphs">abc</text><path d="M760.5 117.5H775.5V127.5H760.5L756.5 122.5z" fill="#ebe9e1" stroke="#d4d2c8" stroke-width="1"/><text x="761.5" y="125.8" font-size="9.5" font-weight="bold" font-family="Liberation Sans" fill="#c6c4bc" textLength="11" lengthAdjust="spacingAndGlyphs">ab</text><circle cx="774.5" cy="131" r="4.6" fill="#d2cccc"/><path d="M793.5 117.5H809.5V127.5H793.5L789.5 122.5z" fill="#ebe9e1" stroke="#d4d2c8" stroke-width="1"/><text x="794.5" y="125.8" font-size="9.5" font-weight="bold" font-family="Liberation Sans" fill="#c6c4bc" textLength="14" lengthAdjust="spacingAndGlyphs">abc</text><path d="M796 132c2.5-3 5-4 7.5-4s5 1 7.5 4c-2.5 3-5 4-7.5 4s-5-1-7.5-4z" fill="#fff" stroke="#c8c8c8" stroke-width="0.8"/><circle cx="803.5" cy="132" r="2" fill="#b8b8c8"/><path d="M826.5 117.5H842.5V127.5H826.5L822.5 122.5z" fill="#ebe9e1" stroke="#d4d2c8" stroke-width="1"/><text x="827.5" y="125.8" font-size="9.5" font-weight="bold" font-family="Liberation Sans" fill="#c6c4bc" textLength="14" lengthAdjust="spacingAndGlyphs">abc</text><rect x="835" y="126" width="11" height="10" rx="1.5" fill="#d6d6d6"/><path d="M837 131h5M840 128.5l3 2.5-3 2.5" fill="none" stroke="#fff" stroke-width="1.6"/><path d="M859.5 117.5H875.5V127.5H859.5L855.5 122.5z" fill="#ebe9e1" stroke="#d4d2c8" stroke-width="1"/><text x="860.5" y="125.8" font-size="9.5" font-weight="bold" font-family="Liberation Sans" fill="#c6c4bc" textLength="14" lengthAdjust="spacingAndGlyphs">abc</text><rect x="868" y="126" width="11" height="10" rx="1.5" fill="#d6d6d6"/><circle cx="873.5" cy="131" r="2.6" fill="none" stroke="#fff" stroke-width="1.3"/><path d="M892.5 117.5H908.5V127.5H892.5L888.5 122.5z" fill="#ebe9e1" stroke="#d4d2c8" stroke-width="1"/><text x="893.5" y="125.8" font-size="9.5" font-weight="bold" font-family="Liberation Sans" fill="#c6c4bc" textLength="14" lengthAdjust="spacingAndGlyphs">abc</text><rect x="901" y="126" width="11" height="10" rx="1.5" fill="#dcdad2"/><path d="M903.5 134l6-6" stroke="#fff" stroke-width="1.6"/><rect x="938.5" y="114.5" width="20" height="21" fill="#6495cc" stroke="#2a3a50" stroke-width="1"/><rect x="938.5" y="114.5" width="3.5" height="21" fill="#2a3a50"/><text x="945" y="130" font-size="14" font-family="Liberation Serif" fill="#fff">?</text><defs><linearGradient id="gs" x1="0" y1="0" x2="0" y2="1"><stop offset="0" stop-color="#6aa84f"/><stop offset="1" stop-color="#94cc70"/></linearGradient></defs><rect x="34" y="152" width="24" height="24" fill="url(#gs)"/><circle cx="47.5" cy="162.5" r="7" fill="#7fb85f" stroke="#fff" stroke-width="1.8"/><path d="M42.5 167.5L37 173" stroke="#fff" stroke-width="3" stroke-linecap="round"/><rect x="67" y="152" width="20.5" height="24" fill="#f4c842"/><path d="M67 152h4v15h-4z" fill="#b0406a"/><path d="M69 153h8l-2 3h-6z" fill="#3fa34a"/><path d="M76 153c3 4-1 8 3 12s5 5 4 11" stroke="#3a78d8" stroke-width="2.5" fill="none"/><path d="M70 172c4-2 8-1 12 2" stroke="#3a78d8" stroke-width="2" fill="none"/><rect x="73" y="160" width="3" height="5" fill="#3b8a9a"/><path d="M75 170l14-16" stroke="#7a3a10" stroke-width="3" stroke-linecap="round"/><path d="M75.5 169.5l13-15" stroke="#b85a1a" stroke-width="1.4"/><circle cx="32.8" cy="30.9" r="6.1" fill="none" stroke="#98b21c" stroke-width="2.9"/><path d="M33 31L39.4 37.2" stroke="#0063b1" stroke-width="4.6"/><path d="M33 31L39.4 37.2" stroke="#8db32e" stroke-width="3" stroke-linecap="round"/><path d="M34 32l4 4" stroke="#c4d870" stroke-width="1"/><circle cx="32.9" cy="30.8" r="1.6" fill="#f47a1a"/><rect x="948" y="31" width="10" height="1" fill="#fff"/><rect x="993.5" y="26.5" width="9.5" height="9.5" fill="none" stroke="#fff" stroke-width="1"/><path d="M1039 26l10 10M1049 26l-10 10" stroke="#fff" stroke-width="1.1"/><rect x="237.5" y="188.5" width="10.5" height="10.5" rx="2" fill="none" stroke="#777" stroke-width="0.9"/><rect x="239.5" y="193" width="4.5" height="4" fill="none" stroke="#555" stroke-width="0.9"/><path d="M241.5 193V190.5H246V195H244" fill="none" stroke="#555" stroke-width="0.9"/><rect x="251.5" y="188.5" width="10.5" height="10.5" rx="2" fill="none" stroke="#777" stroke-width="0.9"/><path d="M254 191l6 6M260 191l-6 6" stroke="#444" stroke-width="1.8"/><rect x="26.5" y="211.5" width="11.5" height="11" fill="none" stroke="#777" stroke-width="1"/><rect x="34" y="219.5" width="6.5" height="6.5" rx="1" fill="#5aa05a"/><circle cx="37.2" cy="222.7" r="1.8" fill="#cfe6cf"/><path d="M52 216c1-3.5 4-5.5 7.5-5 1.5.2 2.8 1 3.6 2l1.6-1.6v5.5h-5.5l2-2c-1.5-1.5-3.7-1.8-5.5-.6-.7.5-1.2 1-1.5 1.7z" fill="#3f83cf"/><path d="M64 219c-1 3.5-4 5.5-7.5 5-1.5-.2-2.8-1-3.6-2l-1.6 1.6v-5.5h5.5l-2 2c1.5 1.5 3.7 1.8 5.5.6.7-.5 1.2-1 1.5-1.7z" fill="#3f83cf"/><path d="M76 210.5h14l-5.5 7v8l-3-2v-6z" fill="#6a98cf" stroke="#4a74a8" stroke-width="0.7"/><rect x="76.5" y="210.5" width="13" height="2.3" fill="#f5dc40"/><path d="M101 211.5h14M102.5 212v12M102 217h4M102 222h4" stroke="#999" stroke-width="0.9"/><rect x="104.5" y="215" width="2.6" height="2.6" fill="#f39c12"/><rect x="104.5" y="220.5" width="2.6" height="2.6" fill="#f39c12"/><path d="M111 210l5 5h-3v9h-4v-9h-3z" fill="#6a98cf" stroke="#2f4f7f" stroke-width="0.8"/><circle cx="133" cy="217.8" r="6.8" fill="#6994cc" stroke="#4d78b0" stroke-width="0.6"/><text x="131" y="221.5" font-size="9.5" font-weight="bold" font-style="italic" font-family="Liberation Serif" fill="#fff">i</text><defs><linearGradient id="shg" x1="0" y1="0" x2="1" y2="1"><stop offset="0" stop-color="#ffffff"/><stop offset="1" stop-color="#a9c5e6"/></linearGradient></defs><rect x="17" y="234" width="247" height="230" fill="#fff"/><rect x="17" y="234" width="247" height="1" fill="#b8b8b8"/><rect x="263" y="234" width="1" height="230" fill="#c8c8c8"/><rect x="17" y="463" width="247" height="1" fill="#b4b4b4"/><rect x="18" y="307" width="231" height="18" fill="#efefef"/><defs><linearGradient id="sbg" x1="0" x2="1"><stop offset="0" stop-color="#fdfdfd"/><stop offset="1" stop-color="#ececec"/></linearGradient><linearGradient id="sbgv" x1="0" y1="0" x2="0" y2="1"><stop offset="0" stop-color="#fdfdfd"/><stop offset="1" stop-color="#ececec"/></linearGradient></defs><rect x="249" y="235" width="14" height="214" fill="#e4e4e4"/><rect x="249" y="235" width="14" height="13" fill="url(#sbgv)"/><path d="M252.5 243.5h8l-4-4z" fill="#4a4a4a"/><rect x="249" y="436" width="14" height="13" fill="url(#sbgv)"/><path d="M252.5 440.5h8l-4 4z" fill="#4a4a4a"/><rect x="249" y="248" width="14" height="1" fill="#bcbcbc"/><rect x="249" y="435" width="14" height="1" fill="#bcbcbc"/><rect x="249" y="332" width="14" height="26" fill="url(#sbg)"/><rect x="249" y="332" width="14" height="1" fill="#bcbcbc"/><rect x="249" y="358" width="14" height="1" fill="#bcbcbc"/><rect x="249" y="235" width="1" height="228" fill="#bcbcbc"/><rect x="17" y="449" width="232" height="14" fill="#e4e4e4"/><rect x="17" y="449" width="14" height="14" fill="url(#sbgv)"/><path d="M25 452v8l-4-4z" fill="#4a4a4a"/><rect x="236" y="449" width="13" height="14" fill="url(#sbgv)"/><path d="M241 452v8l4-4z" fill="#4a4a4a"/><rect x="81" y="449" width="130" height="14" fill="url(#sbgv)"/><rect x="17" y="449" width="232" height="1" fill="#bcbcbc"/><rect x="17" y="463" width="232" height="1" fill="#b4b4b4"/><rect x="31" y="449" width="1" height="14" fill="#bcbcbc"/><rect x="235" y="449" width="1" height="14" fill="#bcbcbc"/><rect x="81" y="449" width="1" height="14" fill="#bcbcbc"/><rect x="211" y="449" width="1" height="14" fill="#bcbcbc"/><rect x="250" y="450" width="13" height="13" fill="#f0f0f0"/><rect x="249" y="463" width="15" height="1" fill="#b4b4b4"/><path d="M34.5 242h7l-3.5 4z" fill="#606060"/><path d="M52.5 238.5h6l1.5 1.5h5.5v10.5h-13z" fill="#f0f0f0" stroke="#8a8a8a" stroke-width="0.9"/><path d="M52.5 238.5h6l1 1.5h6" fill="none" stroke="#8a8a8a" stroke-width="2"/><path transform="translate(71 255.5)" d="M1.2 4.5C1 2 3 1.8 5 2.6C7 3.4 9 3.2 11 2.2C13 1.4 15.5 1.6 15.5 4C15.5 5.5 16 7 15 8C13.5 8.8 11 7.2 8 8.6C6 9.5 4 11.5 2.5 11.3C0.8 11 0.8 9 1 7.5Z" fill="url(#shg)" stroke="#4a4a4a" stroke-width="0.9"/><path transform="translate(71 273.5)" d="M1.2 4.5C1 2 3 1.8 5 2.6C7 3.4 9 3.2 11 2.2C13 1.4 15.5 1.6 15.5 4C15.5 5.5 16 7 15 8C13.5 8.8 11 7.2 8 8.6C6 9.5 4 11.5 2.5 11.3C0.8 11 0.8 9 1 7.5Z" fill="url(#shg)" stroke="#4a4a4a" stroke-width="0.9"/><path transform="translate(71 291.5)" d="M1.2 4.5C1 2 3 1.8 5 2.6C7 3.4 9 3.2 11 2.2C13 1.4 15.5 1.6 15.5 4C15.5 5.5 16 7 15 8C13.5 8.8 11 7.2 8 8.6C6 9.5 4 11.5 2.5 11.3C0.8 11 0.8 9 1 7.5Z" fill="url(#shg)" stroke="#4a4a4a" stroke-width="0.9"/><path transform="translate(71 309.5)" d="M1.2 4.5C1 2 3 1.8 5 2.6C7 3.4 9 3.2 11 2.2C13 1.4 15.5 1.6 15.5 4C15.5 5.5 16 7 15 8C13.5 8.8 11 7.2 8 8.6C6 9.5 4 11.5 2.5 11.3C0.8 11 0.8 9 1 7.5Z" fill="url(#shg)" stroke="#4a4a4a" stroke-width="0.9"/><path transform="translate(71 327.5)" d="M1.2 4.5C1 2 3 1.8 5 2.6C7 3.4 9 3.2 11 2.2C13 1.4 15.5 1.6 15.5 4C15.5 5.5 16 7 15 8C13.5 8.8 11 7.2 8 8.6C6 9.5 4 11.5 2.5 11.3C0.8 11 0.8 9 1 7.5Z" fill="url(#shg)" stroke="#4a4a4a" stroke-width="0.9"/><rect x="18" y="307" width="231" height="18" fill="none"/><rect x="53.0" y="346.0" width="4.35" height="4.35" fill="#1f304a"/><rect x="57.33" y="346.0" width="4.35" height="4.35" fill="#b2cbe9"/><rect x="61.66" y="346.0" width="4.35" height="4.35" fill="#1f304a"/><rect x="53.0" y="350.33" width="4.35" height="4.35" fill="#b2cbe9"/><rect x="57.83" y="350.83" width="3.4" height="3.4" fill="#1f304a"/><rect x="61.66" y="350.33" width="4.35" height="4.35" fill="#b2cbe9"/><rect x="53.0" y="354.66" width="4.35" height="4.35" fill="#1f304a"/><rect x="57.33" y="354.66" width="4.35" height="4.35" fill="#b2cbe9"/><path d="M36 367.5v6.5l4-3.25z" fill="#606060"/><path d="M36 403.5v6.5l4-3.25z" fill="#606060"/><path d="M36 421.5v6.5l4-3.25z" fill="#606060"/><path d="M18 439.5v6.5l2.5-3.25z" fill="#606060"/><ellipse cx="59" cy="366.5" rx="6" ry="2.2" fill="#f4f4f4" stroke="#888" stroke-width="0.8"/><path d="M53 366.5v7.5c0 1.2 2.7 2.2 6 2.2s6-1 6-2.2v-7.5" fill="#f4f4f4" stroke="#888" stroke-width="0.8"/><path d="M53 370.5c0 1.2 2.7 2.2 6 2.2s6-1 6-2.2" fill="none" stroke="#888" stroke-width="0.7"/><rect x="53.0" y="382.0" width="4.35" height="4.35" fill="#1f304a"/><rect x="57.33" y="382.0" width="4.35" height="4.35" fill="#b2cbe9"/><rect x="61.66" y="382.0" width="4.35" height="4.35" fill="#1f304a"/><rect x="53.0" y="386.33" width="4.35" height="4.35" fill="#b2cbe9"/><rect x="57.83" y="386.83" width="3.4" height="3.4" fill="#1f304a"/><rect x="61.66" y="386.33" width="4.35" height="4.35" fill="#b2cbe9"/><rect x="53.0" y="390.66" width="4.35" height="4.35" fill="#1f304a"/><rect x="57.33" y="390.66" width="4.35" height="4.35" fill="#b2cbe9"/><circle cx="58.6" cy="404.8" r="5.7" fill="none" stroke="#8fb01e" stroke-width="2.7"/><path d="M58.8 405L64.8 410.8" stroke="#fff" stroke-width="4.2"/><path d="M58.8 405L64.8 410.8" stroke="#84ad2e" stroke-width="2.8" stroke-linecap="round"/><path d="M59.8 406l3.6 3.6" stroke="#c4d870" stroke-width="0.9"/><circle cx="58.7" cy="404.8" r="1.5" fill="#f47a1a"/><rect x="52.5" y="417.5" width="13" height="13.5" fill="#f4f4f4" stroke="#777" stroke-width="0.9"/><path d="M58 418v12M61 418v12" stroke="#999" stroke-width="0.8"/><path d="M58.5 419h2M58.5 421h2M58.5 423h2" stroke="#555" stroke-width="0.8"/><rect x="58" y="425" width="3" height="4" fill="#fff" stroke="#555" stroke-width="0.7"/><path d="M32.5 437.5h5l1.5 1.5h7v11h-13.5z" fill="#f2f2f2" stroke="#8a8a8a" stroke-width="0.9"/><rect x="134" y="466" width="1" height="1" fill="#b0b0b0"/><rect x="137" y="466" width="1" height="1" fill="#b0b0b0"/><rect x="140" y="466" width="1" height="1" fill="#b0b0b0"/><rect x="143" y="466" width="1" height="1" fill="#b0b0b0"/><rect x="146" y="466" width="1" height="1" fill="#b0b0b0"/><rect x="149" y="466" width="1" height="1" fill="#b0b0b0"/><rect x="266" y="445" width="1" height="1" fill="#b0b0b0"/><rect x="266" y="448" width="1" height="1" fill="#b0b0b0"/><rect x="266" y="451" width="1" height="1" fill="#b0b0b0"/><rect x="266" y="454" width="1" height="1" fill="#b0b0b0"/><rect x="266" y="457" width="1" height="1" fill="#b0b0b0"/><rect x="266" y="460" width="1" height="1" fill="#b0b0b0"/><rect x="266" y="463" width="1" height="1" fill="#b0b0b0"/><rect x="237.5" y="474.5" width="10.5" height="10.5" rx="2" fill="none" stroke="#777" stroke-width="0.9"/><rect x="239.5" y="479" width="4.5" height="4" fill="none" stroke="#555" stroke-width="0.9"/><path d="M241.5 479V476.5H246V481H244" fill="none" stroke="#555" stroke-width="0.9"/><rect x="251.5" y="474.5" width="10.5" height="10.5" rx="2" fill="none" stroke="#777" stroke-width="0.9"/><path d="M254 477l6 6M260 477l-6 6" stroke="#444" stroke-width="1.8"/><path d="M27 503l5-4 3 3-4 6z" fill="#e8c040"/><path d="M26 506l4-3 3 3-2 3z" fill="#5a8fd0"/><path d="M27 508l3-2 3 3-2 2z" fill="#e04040"/><path d="M30 504l4-3 4 5-4 4z" fill="#d8b070" stroke="#a07840" stroke-width="0.6"/><path d="M35 503l5-5" stroke="#d09030" stroke-width="1.8"/><path d="M52 500.5h3M52 501v9h8M54 499h9v10h-9z" fill="none" stroke="#777" stroke-width="0.9"/><path d="M57 506v-8a1.5 1.5 0 0 1 3 0v7" fill="none" stroke="#3f6fb0" stroke-width="1"/><rect x="59" y="505" width="6.5" height="6.5" rx="1" fill="#5aa05a"/><circle cx="62.2" cy="508.2" r="1.8" fill="#cfe6cf"/><path d="M75 504.5c3-4 6-5.5 9-5.5s6 1.5 9 5.5c-3 4-6 5.5-9 5.5s-6-1.5-9-5.5z" fill="#f4f4f4" stroke="#888" stroke-width="0.8"/><circle cx="83.5" cy="504.5" r="3.8" fill="#6a9ad8" stroke="#3a6aa8" stroke-width="0.6"/><circle cx="83" cy="504" r="1.3" fill="#111"/><path d="M88.5 509.5h5l-2.5 2.5z" fill="#333"/><path d="M101 496.5h14l-5.5 7v8.5l-3-2v-6.5z" fill="#6a98cf" stroke="#4a74a8" stroke-width="0.7"/><rect x="101.5" y="496.5" width="13" height="2.3" fill="#f5dc40"/><text x="126" y="508.5" font-size="17" font-family="Liberation Serif" fill="#cfcfcf">ε</text><path d="M133.5 504.5h8l-2 3v4h-4v-4z" fill="#e2e2e2"/><path d="M147 502.5h8l-4 4z" fill="#a8a8a8"/><path d="M164 497.5h14M165 498v12M165 503h4M165 508h4" stroke="#999" stroke-width="0.9"/><rect x="167" y="501.5" width="2.6" height="2.6" fill="#f39c12"/><rect x="167" y="507" width="2.6" height="2.6" fill="#f39c12"/><path d="M172.5 511.5l5-5h-3v-9h-4v9h-3z" fill="#6a98cf" stroke="#2f4f7f" stroke-width="0.8"/><path d="M189 497.5h14M190 498v12M190 503h4M190 508h4" stroke="#999" stroke-width="0.9"/><rect x="192" y="501.5" width="2.6" height="2.6" fill="#f39c12"/><rect x="192" y="507" width="2.6" height="2.6" fill="#f39c12"/><path d="M198 496l5 5h-3v9h-4v-9h-3z" fill="#6a98cf" stroke="#2f4f7f" stroke-width="0.8"/><rect x="213.5" y="497.5" width="11.5" height="11" fill="none" stroke="#777" stroke-width="1"/><rect x="221" y="506" width="7" height="5.5" rx="1.3" fill="#e02020"/><rect x="222.5" y="508" width="4" height="1.5" fill="#fff"/><rect x="17" y="519" width="247" height="200" fill="#fff"/><rect x="17" y="519" width="247" height="1" fill="#b8b8b8"/><rect x="263" y="519" width="1" height="200" fill="#c8c8c8"/><rect x="17" y="718" width="247" height="1" fill="#b4b4b4"/><rect x="18" y="521" width="245" height="18" fill="#0078d7"/><rect x="17" y="704" width="246" height="14" fill="#e4e4e4"/><rect x="17" y="704" width="14" height="14" fill="url(#sbgv)"/><path d="M25 707v8l-4-4z" fill="#4a4a4a"/><rect x="250" y="704" width="13" height="14" fill="url(#sbgv)"/><path d="M255 707v8l4-4z" fill="#4a4a4a"/><rect x="32" y="704" width="214" height="14" fill="url(#sbgv)"/><rect x="17" y="704" width="246" height="1" fill="#bcbcbc"/><rect x="17" y="718" width="246" height="1" fill="#b4b4b4"/><rect x="31" y="704" width="1" height="14" fill="#bcbcbc"/><rect x="249" y="704" width="1" height="14" fill="#bcbcbc"/><rect x="32" y="704" width="1" height="14" fill="#bcbcbc"/><rect x="246" y="704" width="1" height="14" fill="#bcbcbc"/><path d="M22 527.5h7l-3.5 4z" fill="#222"/><rect x="41.5" y="523.5" width="13" height="13" fill="#fff" stroke="#333"/><path d="M44.5 530l2.5 3.5 5-7" fill="none" stroke="#000" stroke-width="1.6"/><rect x="62.5" y="523.5" width="4.35" height="4.35" fill="#1f304a"/><rect x="66.83" y="523.5" width="4.35" height="4.35" fill="#b2cbe9"/><rect x="71.16" y="523.5" width="4.35" height="4.35" fill="#1f304a"/><rect x="62.5" y="527.83" width="4.35" height="4.35" fill="#b2cbe9"/><rect x="67.33" y="528.33" width="3.4" height="3.4" fill="#1f304a"/><rect x="71.16" y="527.83" width="4.35" height="4.35" fill="#b2cbe9"/><rect x="62.5" y="532.16" width="4.35" height="4.35" fill="#1f304a"/><rect x="66.83" y="532.16" width="4.35" height="4.35" fill="#b2cbe9"/><rect x="61" y="540" width="16" height="16" fill="#000"/><rect x="41.5" y="577.5" width="13" height="13" fill="#fff" stroke="#999"/><rect x="61.5" y="576.5" width="15" height="15" fill="#d4b23a" stroke="#555" stroke-width="0.8"/><rect x="41.5" y="595.5" width="13" height="13" fill="#fff" stroke="#999"/><rect x="61.5" y="594.5" width="15" height="15" fill="#6e9a6a" stroke="#555" stroke-width="0.8"/><rect x="41.5" y="613.5" width="13" height="13" fill="#fff" stroke="#999"/><circle cx="69" cy="620" r="2.6" fill="#a0694a" stroke="#5a3a2a" stroke-width="0.6"/><rect x="32" y="519" width="135" height="23" fill="none" stroke="#1a1a1a" stroke-width="3"/><rect x="29.5" y="516.5" width="140" height="28" fill="none" stroke="#e8343c" stroke-width="2.8"/><rect x="21.5" y="722.5" width="199" height="20.5" rx="2.5" fill="#fff" stroke="#b8b8b8"/><circle cx="34.5" cy="731" r="3.8" fill="none" stroke="#777" stroke-width="1.2"/><path d="M37.3 733.8l3.5 3.5" stroke="#777" stroke-width="1.4"/><rect x="313.5" y="722.5" width="101.5" height="20.5" rx="2.5" fill="#fff" stroke="#b8b8b8"/><g transform="translate(420 725)"><path d="M3 3c2-3 7-3 9 1l2 5c1 3-1 5-4 5s-5-1-6-3z" fill="#555" stroke="#222" stroke-width="0.7"/><circle cx="10" cy="10" r="2.5" fill="#fff" stroke="#333" stroke-width="0.6"/><path d="M6 3l4 6M13 2l2-1" stroke="#eee" stroke-width="0.8"/></g><rect x="471.5" y="722.5" width="80" height="20.5" rx="2.5" fill="#fff" stroke="#b8b8b8"/><rect x="531" y="723" width="1" height="20" fill="#d0d0d0"/><path d="M537 731h7l-3.5 4z" fill="#555"/><path d="M566.5 733v-3a3.5 3.5 0 0 1 7 0v3" fill="none" stroke="#666" stroke-width="1.7"/><rect x="564" y="732" width="12" height="8" rx="1" fill="#666"/><rect x="627.5" y="723.5" width="86.5" height="19" rx="2.5" fill="#fff" stroke="#b8b8b8"/><rect x="700" y="724" width="1" height="18" fill="#d0d0d0"/><path d="M704 731.5h7.5l-3.75-4zM704 734.5h7.5l-3.75 4z" fill="#555"/><rect x="768.5" y="723.5" width="82.5" height="19" rx="2.5" fill="#fff" stroke="#b8b8b8"/><rect x="837.5" y="724" width="1" height="18" fill="#d0d0d0"/><path d="M841 731.5h7.5l-3.75-4zM841 734.5h7.5l-3.75 4z" fill="#555"/><rect x="858.5" y="726.5" width="13" height="13" fill="#fff" stroke="#333"/><path d="M861.5 733l2.5 3.5 5-7" fill="none" stroke="#000" stroke-width="1.6"/><g fill="none" stroke="#666" stroke-width="0.9"><ellipse cx="937" cy="733" rx="7" ry="6.5"/><ellipse cx="937" cy="733" rx="3" ry="6.5"/><path d="M930 733h14M931 730h12M931 736h12"/></g><ellipse cx="1029" cy="732.3" rx="8" ry="6.2" fill="#666"/><path d="M1028 737l8.5 4-3-5.5z" fill="#666"/><circle cx="1025.3" cy="732.3" r="1.1" fill="#fff"/><circle cx="1029" cy="732.3" r="1.1" fill="#fff"/><circle cx="1032.7" cy="732.3" r="1.1" fill="#fff"/><rect x="1065" y="744" width="1" height="1" fill="#b8b8b8"/><rect x="1062" y="744" width="1" height="1" fill="#b8b8b8"/><rect x="1059" y="744" width="1" height="1" fill="#b8b8b8"/><rect x="1056" y="744" width="1" height="1" fill="#b8b8b8"/><rect x="1065" y="741" width="1" height="1" fill="#b8b8b8"/><rect x="1062" y="741" width="1" height="1" fill="#b8b8b8"/><rect x="1059" y="741" width="1" height="1" fill="#b8b8b8"/><rect x="1065" y="738" width="1" height="1" fill="#b8b8b8"/><rect x="1062" y="738" width="1" height="1" fill="#b8b8b8"/><rect x="1065" y="735" width="1" height="1" fill="#b8b8b8"/><defs><clipPath id="cliptree"><rect x="18" y="235" width="231" height="214"/></clipPath><clipPath id="cliplayers"><rect x="18" y="520" width="245" height="184"/></clipPath><clipPath id="clipcoord"><rect x="263" y="720" width="47" height="25"/></clipPath><clipPath id="clipscale"><rect x="448" y="720" width="20" height="25"/></clipPath><clipPath id="clipmag"><rect x="584" y="720" width="40" height="25"/></clipPath><clipPath id="cliprot"><rect x="723.5" y="720" width="35.5" height="25"/></clipPath></defs><g font-family="Liberation Sans"><text x="46.5" y="36" font-size="12" fill="#fff" stroke="#fff" stroke-width="0.25" textLength="273.5" lengthAdjust="spacingAndGlyphs" >*Interpolating Point Data — QGIS [Spatial Thoughts]</text><text x="27.2" y="61" font-size="12" fill="#000" stroke="#000" stroke-width="0.25" textLength="36.6" lengthAdjust="spacingAndGlyphs" >Project</text><text x="78" y="61" font-size="12" fill="#000" stroke="#000" stroke-width="0.25" textLength="20" lengthAdjust="spacingAndGlyphs" >Edit</text><text x="112" y="61" font-size="12" fill="#000" stroke="#000" stroke-width="0.25" textLength="25" lengthAdjust="spacingAndGlyphs" >View</text><text x="151" y="61" font-size="12" fill="#000" stroke="#000" stroke-width="0.25" textLength="28" lengthAdjust="spacingAndGlyphs" >Layer</text><text x="193" y="61" font-size="12" fill="#000" stroke="#000" stroke-width="0.25" textLength="42" lengthAdjust="spacingAndGlyphs" >Settings</text><text x="249" y="61" font-size="12" fill="#000" stroke="#000" stroke-width="0.25" textLength="39" lengthAdjust="spacingAndGlyphs" >Plugins</text><text x="302" y="61" font-size="12" fill="#000" stroke="#000" stroke-width="0.25" textLength="34" lengthAdjust="spacingAndGlyphs" >Vector</text><text x="349" y="61" font-size="12" fill="#000" stroke="#000" stroke-width="0.25" textLength="31.7" lengthAdjust="spacingAndGlyphs" >Raster</text><text x="395" y="61" font-size="12" fill="#000" stroke="#000" stroke-width="0.25" textLength="48" lengthAdjust="spacingAndGlyphs" >Database</text><text x="457" y="61" font-size="12" fill="#000" stroke="#000" stroke-width="0.25" textLength="24" lengthAdjust="spacingAndGlyphs" >Web</text><text x="495" y="61" font-size="12" fill="#000" stroke="#000" stroke-width="0.25" textLength="29" lengthAdjust="spacingAndGlyphs" >Mesh</text><text x="538" y="61" font-size="12" fill="#000" stroke="#000" stroke-width="0.25" textLength="56.6" lengthAdjust="spacingAndGlyphs" >Processing</text><text x="609" y="61" font-size="12" fill="#000" stroke="#000" stroke-width="0.25" textLength="25" lengthAdjust="spacingAndGlyphs" >Help</text><rect x="43.8" y="63" width="3.8000000000000043" height="1" fill="#000"/><rect x="78" y="63" width="6" height="1" fill="#000"/><rect x="112" y="63" width="7" height="1" fill="#000"/><rect x="151" y="63" width="6" height="1" fill="#000"/><rect x="193" y="63" width="7" height="1" fill="#000"/><rect x="249" y="63" width="7" height="1" fill="#000"/><rect x="324.3" y="63" width="6.699999999999989" height="1" fill="#000"/><rect x="349.2" y="63" width="6.800000000000011" height="1" fill="#000"/><rect x="395" y="63" width="8" height="1" fill="#000"/><rect x="457" y="63" width="12" height="1" fill="#000"/><rect x="495.3" y="63" width="10.199999999999989" height="1" fill="#000"/><rect x="556" y="63" width="6" height="1" fill="#000"/><rect x="609.2" y="63" width="8.799999999999955" height="1" fill="#000"/><text x="21.5" y="198" font-size="12" fill="#000" stroke="#000" stroke-width="0.25" textLength="41.5" lengthAdjust="spacingAndGlyphs" >Browser</text><text x="21" y="484.3" font-size="12" fill="#000" stroke="#000" stroke-width="0.25" textLength="32.5" lengthAdjust="spacingAndGlyphs" >Layers</text><text x="73.2" y="248.8" font-size="12" fill="#000" stroke="#000" stroke-width="0.25" textLength="52.5" lengthAdjust="spacingAndGlyphs" clip-path="url(#cliptree)" >Shapefiles</text><text x="93.6" y="266.8" font-size="12" fill="#000" stroke="#000" stroke-width="0.25" textLength="184" lengthAdjust="spacingAndGlyphs" clip-path="url(#cliptree)" >Arlington2007_SS_Points_stpl83.shp</text><text x="93.6" y="284.8" font-size="12" fill="#000" stroke="#000" stroke-width="0.25" textLength="190.9" lengthAdjust="spacingAndGlyphs" clip-path="url(#cliptree)" >Arlington_Soundings_2007_stpl83.shp</text><text x="93.3" y="302.8" font-size="12" fill="#000" stroke="#000" stroke-width="0.25" textLength="154.3" lengthAdjust="spacingAndGlyphs" clip-path="url(#cliptree)" >Boundary2004_550_stpl83.shp</text><text x="93.3" y="320.8" font-size="12" fill="#000" stroke="#000" stroke-width="0.25" textLength="145.1" lengthAdjust="spacingAndGlyphs" clip-path="url(#cliptree)" >Islands_2004_550_stpl83.shp</text><text x="93.3" y="338.8" font-size="12" fill="#000" stroke="#000" stroke-width="0.25" textLength="114.5" lengthAdjust="spacingAndGlyphs" clip-path="url(#cliptree)" >tnrs07Ar1_5ftcont.shp</text><text x="73.4" y="356.8" font-size="12" fill="#000" stroke="#000" stroke-width="0.25" textLength="87.8" lengthAdjust="spacingAndGlyphs" clip-path="url(#cliptree)" >ContourMap.pdf</text><text x="73.4" y="374.8" font-size="12" fill="#000" stroke="#000" stroke-width="0.25" textLength="87.8" lengthAdjust="spacingAndGlyphs" clip-path="url(#cliptree)" >ContourMap.pdf</text><text x="73.4" y="392.8" font-size="12" fill="#000" stroke="#000" stroke-width="0.25" textLength="80.4" lengthAdjust="spacingAndGlyphs" clip-path="url(#cliptree)" >elevation_tin.tif</text><text x="73.4" y="410.8" font-size="12" fill="#000" stroke="#000" stroke-width="0.25" textLength="125.2" lengthAdjust="spacingAndGlyphs" clip-path="url(#cliptree)" >Interpolating Point Data</text><text x="73.4" y="428.8" font-size="12" fill="#000" stroke="#000" stroke-width="0.25" textLength="70.2" lengthAdjust="spacingAndGlyphs" clip-path="url(#cliptree)" >Shapefiles.zip</text><text x="53.5" y="446.8" font-size="12" fill="#000" stroke="#000" stroke-width="0.25" textLength="88.3" lengthAdjust="spacingAndGlyphs" clip-path="url(#cliptree)" >Network analysis</text><text x="83" y="534.8" font-size="12" fill="#fff" stroke="#fff" stroke-width="0.25" font-weight="bold" textLength="72" lengthAdjust="spacingAndGlyphs" >elevation_tin</text><rect x="83" y="536.5" width="72" height="1" fill="#fff"/><text x="83" y="552.3" font-size="12" fill="#000" stroke="#000" stroke-width="0.25" textLength="39" lengthAdjust="spacingAndGlyphs" >502.376</text><text x="83" y="570.3" font-size="12" fill="#000" stroke="#000" stroke-width="0.25" textLength="18" lengthAdjust="spacingAndGlyphs" >550</text><text x="83.4" y="588.3" font-size="12" fill="#7a7a7a" stroke="#7a7a7a" font-style="italic" textLength="146.6" lengthAdjust="spacingAndGlyphs" stroke-width="0.4">Boundary2004_550_stpl83</text><text x="83.4" y="606.3" font-size="12" fill="#7a7a7a" stroke="#7a7a7a" font-style="italic" textLength="136.8" lengthAdjust="spacingAndGlyphs" stroke-width="0.4">Islands_2004_550_stpl83</text><text x="83.4" y="624.3" font-size="12" fill="#7a7a7a" stroke="#7a7a7a" font-style="italic" textLength="181" lengthAdjust="spacingAndGlyphs" clip-path="url(#cliplayers)" stroke-width="0.4">Arlington2007_SS_Points_stpl83</text><text x="49.3" y="738" font-size="12" fill="#7a7a7a" stroke="#7a7a7a" stroke-width="0.25" textLength="111.2" lengthAdjust="spacingAndGlyphs" >Type to locate (Ctrl+K)</text><text x="259.5" y="738" font-size="12" fill="#000" stroke="#000" stroke-width="0.25" textLength="54" lengthAdjust="spacingAndGlyphs" clip-path="url(#clipcoord)" >Coordinate</text><text x="320" y="738.5" font-size="12" fill="#000" stroke="#000" stroke-width="0.25" textLength="87.5" lengthAdjust="spacingAndGlyphs" >2351101,6931709</text><text x="444" y="738" font-size="12" fill="#000" stroke="#000" stroke-width="0.25" textLength="27" lengthAdjust="spacingAndGlyphs" clip-path="url(#clipscale)" >Scale</text><text x="475.3" y="738.5" font-size="12" fill="#000" stroke="#000" stroke-width="0.25" textLength="39.2" lengthAdjust="spacingAndGlyphs" >1:49373</text><text x="577" y="738" font-size="12" fill="#000" stroke="#000" stroke-width="0.25" textLength="47.5" lengthAdjust="spacingAndGlyphs" clip-path="url(#clipmag)" >Magnifier</text><text x="632.6" y="738.5" font-size="12" fill="#000" stroke="#000" stroke-width="0.25" textLength="28" lengthAdjust="spacingAndGlyphs" >100%</text><text x="719" y="738" font-size="12" fill="#000" stroke="#000" stroke-width="0.25" textLength="43" lengthAdjust="spacingAndGlyphs" clip-path="url(#cliprot)" >Rotation</text><text x="772.5" y="738.5" font-size="12" fill="#000" stroke="#000" stroke-width="0.25" textLength="27" lengthAdjust="spacingAndGlyphs" >0.0 °</text><text x="876.2" y="738.5" font-size="12" fill="#000" stroke="#000" stroke-width="0.25" textLength="34.9" lengthAdjust="spacingAndGlyphs" >Render</text><text x="948" y="738.5" font-size="12" fill="#000" stroke="#000" stroke-width="0.25" textLength="53.4" lengthAdjust="spacingAndGlyphs" >EPSG:2276</text></g></svg>
</body></html>
